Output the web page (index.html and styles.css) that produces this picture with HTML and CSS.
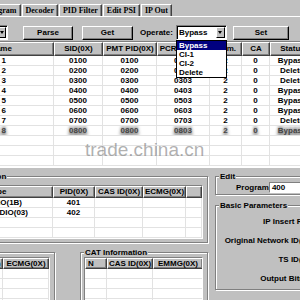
FILE: index.html
```html
<!DOCTYPE html>
<html>
  <head>
    <meta charset="UTF-8">
    <title>TS Program Edit</title>
    <link rel="stylesheet" href="styles.css">
  </head>
  <body>
    <div class="window">
      <div class="tabs">
        <div class="tab">Program</div>
        <div class="tab">Decoder</div>
        <div class="tab">PID Filter</div>
        <div class="tab">Edit PSI</div>
        <div class="tab">IP Out</div>
      </div>

      <div class="panel">
        <div class="toolbar">
          <div class="combo combo-source">
            <span class="combo-text">ASI 1</span><span class="combo-arrow"></span>
          </div>
          <button class="btn btn-parse">Parse</button>
          <button class="btn btn-get">Get</button>
          <span class="operate-label">Operate:</span>
          <div class="combo combo-operate">
            <span class="combo-text">Bypass</span><span class="combo-arrow"></span>
            <ul class="dropdown">
              <li class="selected">Bypass</li>
              <li>CI-1</li>
              <li>CI-2</li>
              <li>Delete</li>
            </ul>
          </div>
          <button class="btn btn-set">Set</button>
        </div>

        <div class="list program-list">
          <div class="row head">
            <div class="cell first">No.</div>
            <div class="cell first">Program Name</div>
            <div class="cell">SID(0X)</div>
            <div class="cell">PMT PID(0X)</div>
            <div class="cell">PCR PID(0X)</div>
            <div class="cell">Num.</div>
            <div class="cell">CA</div>
            <div class="cell">Status</div>
            <div class="cell"></div>
          </div>
          <div class="row"><div class="cell first">1</div><div class="cell first">TV Program 1</div><div class="cell">0100</div><div class="cell">0100</div><div class="cell">0103</div><div class="cell">2</div><div class="cell">0</div><div class="cell">Bypass</div><div class="cell"></div></div>
          <div class="row"><div class="cell first">2</div><div class="cell first">TV Program 2</div><div class="cell">0200</div><div class="cell">0200</div><div class="cell">0203</div><div class="cell">2</div><div class="cell">0</div><div class="cell">Delete</div><div class="cell"></div></div>
          <div class="row"><div class="cell first">3</div><div class="cell first">TV Program 3</div><div class="cell">0300</div><div class="cell">0300</div><div class="cell">0303</div><div class="cell">2</div><div class="cell">0</div><div class="cell">Delete</div><div class="cell"></div></div>
          <div class="row"><div class="cell first">4</div><div class="cell first">TV Program 4</div><div class="cell">0400</div><div class="cell">0400</div><div class="cell">0403</div><div class="cell">2</div><div class="cell">0</div><div class="cell">Bypass</div><div class="cell"></div></div>
          <div class="row"><div class="cell first">5</div><div class="cell first">TV Program 5</div><div class="cell">0500</div><div class="cell">0500</div><div class="cell">0503</div><div class="cell">2</div><div class="cell">0</div><div class="cell">Bypass</div><div class="cell"></div></div>
          <div class="row"><div class="cell first">6</div><div class="cell first">TV Program 6</div><div class="cell">0600</div><div class="cell">0600</div><div class="cell">0603</div><div class="cell">2</div><div class="cell">0</div><div class="cell">Bypass</div><div class="cell"></div></div>
          <div class="row"><div class="cell first">7</div><div class="cell first">TV Program 7</div><div class="cell">0700</div><div class="cell">0700</div><div class="cell">0703</div><div class="cell">2</div><div class="cell">0</div><div class="cell">Delete</div><div class="cell"></div></div>
          <div class="row smudged"><div class="cell first">8</div><div class="cell first">TV Program 8</div><div class="cell">0800</div><div class="cell">0800</div><div class="cell">0803</div><div class="cell">2</div><div class="cell">0</div><div class="cell">Bypass</div><div class="cell"></div></div>
          <div class="row"><div class="cell"></div><div class="cell"></div><div class="cell"></div><div class="cell"></div><div class="cell"></div><div class="cell"></div><div class="cell"></div><div class="cell"></div><div class="cell"></div></div>
          <div class="row"><div class="cell"></div><div class="cell"></div><div class="cell"></div><div class="cell"></div><div class="cell"></div><div class="cell"></div><div class="cell"></div><div class="cell"></div><div class="cell"></div></div>
          <div class="row"><div class="cell"></div><div class="cell"></div><div class="cell"></div><div class="cell"></div><div class="cell"></div><div class="cell"></div><div class="cell"></div><div class="cell"></div><div class="cell"></div></div>
        </div>

        <div class="lower">
          <div class="left-col">
            <fieldset class="group group-stream">
              <legend>Stream Information</legend>
              <div class="list stream-list">
                <div class="row head">
                  <div class="cell first">No.</div>
                  <div class="cell first">Stream Type</div>
                  <div class="cell">PID(0X)</div>
                  <div class="cell">CAS ID(0X)</div>
                  <div class="cell">ECMG(0X)</div>
                  <div class="cell"></div>
                </div>
                <div class="row"><div class="cell first">1</div><div class="cell first">H.264 VIDEO(1B)</div><div class="cell">401</div><div class="cell"></div><div class="cell"></div><div class="cell"></div></div>
                <div class="row"><div class="cell first">2</div><div class="cell first">MPEG1 AUDIO(03)</div><div class="cell">402</div><div class="cell"></div><div class="cell"></div><div class="cell"></div></div>
                <div class="row"><div class="cell"></div><div class="cell"></div><div class="cell"></div><div class="cell"></div><div class="cell"></div><div class="cell"></div></div>
                <div class="row"><div class="cell"></div><div class="cell"></div><div class="cell"></div><div class="cell"></div><div class="cell"></div><div class="cell"></div></div>
              </div>
            </fieldset>

            <div class="group-row">
              <fieldset class="group group-ecm">
                <legend>ECM Information</legend>
                <div class="list ecm-list">
                  <div class="row head">
                    <div class="cell first">N</div>
                    <div class="cell">CAS ID(0X)</div>
                    <div class="cell">ECMG(0X)</div>
                    <div class="cell"></div>
                  </div>
                  <div class="row"><div class="cell"></div><div class="cell"></div><div class="cell"></div><div class="cell"></div></div>
                  <div class="row"><div class="cell"></div><div class="cell"></div><div class="cell"></div><div class="cell"></div></div>
                  <div class="row"><div class="cell"></div><div class="cell"></div><div class="cell"></div><div class="cell"></div></div>
                  <div class="row"><div class="cell"></div><div class="cell"></div><div class="cell"></div><div class="cell"></div></div>
                  <div class="row"><div class="cell"></div><div class="cell"></div><div class="cell"></div><div class="cell"></div></div>
                </div>
              </fieldset>

              <fieldset class="group group-cat">
                <legend>CAT Information</legend>
                <div class="list cat-list">
                  <div class="row head">
                    <div class="cell first">N</div>
                    <div class="cell">CAS ID(0X)</div>
                    <div class="cell">EMMG(0X)</div>
                    <div class="cell"></div>
                  </div>
                  <div class="row"><div class="cell"></div><div class="cell"></div><div class="cell"></div><div class="cell"></div></div>
                  <div class="row"><div class="cell"></div><div class="cell"></div><div class="cell"></div><div class="cell"></div></div>
                  <div class="row"><div class="cell"></div><div class="cell"></div><div class="cell"></div><div class="cell"></div></div>
                  <div class="row"><div class="cell"></div><div class="cell"></div><div class="cell"></div><div class="cell"></div></div>
                  <div class="row"><div class="cell"></div><div class="cell"></div><div class="cell"></div><div class="cell"></div></div>
                </div>
              </fieldset>
            </div>
          </div>

          <div class="right-col">
            <fieldset class="group group-edit">
              <legend>Edit</legend>
              <div class="edit-row">
                <span class="edit-label">Program</span>
                <span class="field">400</span>
              </div>
            </fieldset>

            <fieldset class="group group-basic">
              <legend>Basic Parameters</legend>
              <div class="param-row"><span class="param-label">IP Insert Rate</span><span class="field"></span></div>
              <div class="param-row"><span class="param-label">Original Network ID(0X)</span><span class="field"></span></div>
              <div class="param-row"><span class="param-label">TS ID(0X)</span><span class="field"></span></div>
              <div class="param-row"><span class="param-label">Output Bitrate</span><span class="field"></span></div>
            </fieldset>
          </div>
        </div>
      </div>

      <div class="watermark">trade.china.cn</div>
    </div>
  </body>
</html>
```

FILE: styles.css
```css
/* Windows 98 style dialog, cropped */
body {
  margin: 0;
  width: 300px;
  height: 300px;
  overflow: hidden;
  background: #c0c0c0;
  color: #000;
  font: bold 8px "Liberation Sans", Arial, sans-serif;
}

.window {
  position: relative;
  width: 460px;
  margin-left: -80px;
}

/* Tab strip */
.tabs {
  display: flex;
  height: 12px;
  margin-top: 4px;
  padding-left: 62px;
  border-bottom: 1px solid #fff;
}

.tab {
  height: 12px;
  box-sizing: border-box;
  padding: 0 3px;
  margin-right: 1px;
  border: 1px solid #fff;
  border-bottom: 0;
  border-right-color: #404040;
  box-shadow: inset -1px 0 #808080;
  font: bold 8px "Liberation Serif", "Times New Roman", serif;
  line-height: 11px;
}

.panel {
  padding-top: 8px;
}

/* Toolbar */
.toolbar {
  display: flex;
  align-items: center;
  height: 15px;
  padding-left: 20px;
}

.btn {
  height: 14px;
  padding: 0;
  background: #c0c0c0;
  border: 1px solid;
  border-color: #fff #000 #000 #fff;
  box-shadow: inset -1px -1px #808080;
  font: inherit;
  color: #000;
}

.btn-parse { margin-left: 15px; width: 50px; }
.btn-get { margin-left: 9px; width: 51px; }
.btn-set { margin-left: 6px; width: 56px; }
.operate-label { margin-left: 7px; }

.combo {
  position: relative;
  display: flex;
  align-items: center;
  height: 15px;
  box-sizing: border-box;
  padding: 0 1px 0 2px;
  background: #fff;
  border: 1px solid;
  border-color: #808080 #fff #fff #808080;
  box-shadow: inset 1px 1px #000;
}

.combo-source { width: 68px; }
.combo-operate { margin-left: 3px; width: 51px; }

.combo-text {
  flex: 1;
  line-height: 12px;
}

.combo-arrow {
  display: flex;
  align-items: center;
  justify-content: center;
  width: 9px;
  height: 11px;
  box-sizing: border-box;
  background: #c0c0c0;
  border: 1px solid;
  border-color: #fff #000 #000 #fff;
}

.combo-arrow::after {
  content: "";
  border-left: 2.5px solid transparent;
  border-right: 2.5px solid transparent;
  border-top: 3px solid #000;
}

.dropdown {
  position: absolute;
  left: -1px;
  top: 14px;
  z-index: 2;
  width: 51px;
  box-sizing: border-box;
  margin: 0;
  padding: 0;
  list-style: none;
  background: #fff;
  border: 1px solid #000;
}

.dropdown li {
  height: 9px;
  line-height: 9px;
  padding-left: 2px;
}

.dropdown .selected {
  background: #000080;
  color: #fff;
}

/* List views */
.list {
  background: #fff;
  border: 1px solid;
  border-color: #808080 #fff #fff #808080;
  box-sizing: border-box;
  overflow: hidden;
}

.row {
  display: grid;
  height: 10px;
}

.cell {
  box-sizing: border-box;
  border-right: 1px solid #e2e2e2;
  border-bottom: 1px solid #e2e2e2;
  line-height: 9px;
  text-align: center;
  white-space: nowrap;
  overflow: hidden;
}

.cell.first {
  text-align: left;
  padding-left: 2px;
}

.head {
  height: 14px;
}

.head .cell {
  background: #c0c0c0;
  border: 1px solid;
  border-color: #fff #404040 #404040 #fff;
  box-shadow: inset -1px -1px #808080;
  line-height: 12px;
}

.smudged .cell {
  color: #444;
  text-shadow: 0 2px 3px #666, 0 -2px 3px #777, 0 4px 4px #888;
}

.program-list {
  width: 440px;
  height: 127px;
  margin-top: 1px;
}

.program-list .row {
  grid-template-columns: 31px 102px 49px 54px 53px 32px 28px 45px 1fr;
}

/* Group boxes */
.lower {
  display: flex;
  margin-top: 4px;
}

.left-col {
  width: 280px;
  margin-left: 8px;
}

.right-col {
  width: 150px;
  margin-left: 7px;
}

.group {
  min-width: 0;
  margin: 0;
  padding: 0 4px 3px 3px;
  box-sizing: border-box;
  border: 1px solid #808080;
  box-shadow: inset 1px 1px #fff, 1px 1px 0 #fff;
}

.group legend {
  padding: 0 1px;
  line-height: 9px;
  background: #c0c0c0;
}

.group-stream {
  width: 280px;
  padding-top: 4px;
}

.stream-list {
  height: 54px;
}

.stream-list .head {
  height: 12px;
}

.stream-list .head .cell {
  line-height: 10px;
}

.stream-list .row {
  grid-template-columns: 23px 97px 42px 48px 43px 1fr;
}

.group-row {
  display: flex;
  margin-top: 5px;
}

.group-ecm {
  width: 127px;
  height: 80px;
}

.group-cat {
  width: 128px;
  height: 80px;
  margin-left: 25px;
}

.ecm-list .head,
.cat-list .head {
  height: 11px;
}

.ecm-list .head .cell,
.cat-list .head .cell {
  line-height: 9px;
}

.ecm-list .row {
  grid-template-columns: 23px 47px 46px 1fr;
}

.cat-list .row {
  grid-template-columns: 22px 46px 50px 1fr;
}

.ecm-list,
.cat-list {
  height: 70px;
}

/* Right column */
.group-edit {
  width: 150px;
  padding-top: 1px;
  padding-bottom: 1px;
}

.edit-row {
  display: flex;
  align-items: center;
  height: 11px;
}

.edit-label {
  flex-shrink: 0;
  margin-left: 17px;
}

.field {
  display: block;
  flex-shrink: 0;
  width: 80px;
  height: 11px;
  box-sizing: border-box;
  padding-left: 2px;
  background: #fff;
  border: 1px solid;
  border-color: #808080 #fff #fff #808080;
  line-height: 9px;
}

.group-basic {
  width: 150px;
  margin-top: 6px;
  padding-top: 2px;
  padding-bottom: 1px;
}

.param-row {
  display: flex;
  align-items: center;
  height: 19px;
}

.param-label {
  flex-shrink: 0;
  width: 95px;
  text-align: right;
  white-space: nowrap;
}

.param-row .field {
  margin-left: 4px;
}

/* trade site stamp over the capture */
.watermark {
  position: absolute;
  left: 165px;
  top: 136px;
  font: 19px/19px "Liberation Sans", Arial, sans-serif;
  color: rgba(110, 110, 110, 0.55);
  white-space: nowrap;
}
```
